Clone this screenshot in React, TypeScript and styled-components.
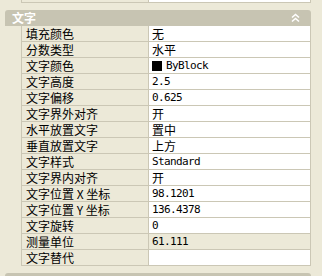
import React from 'react';
import styled, { createGlobalStyle } from 'styled-components';

const Global = createGlobalStyle`
  html, body { margin: 0; padding: 0; background: #ece9d8; overflow: hidden; }
  body { font-family: "Noto Sans CJK SC", sans-serif; font-size: 12px; color: #000; }
`;

const Panel = styled.div`
  width: 322px;
  height: 276px;
  overflow: hidden;
  background: #ece9d8;
  display: flex;
  flex-direction: column;
`;

const Section = styled.section`
  display: flex;
  flex-direction: column;
  padding: 0 11px 0 5px;
  margin-top: 7px;
`;

const Header = styled.div`
  height: 16px;
  background: #c7c4b2;
  border-radius: 3px 3px 0 0;
  display: flex;
  align-items: center;
  justify-content: space-between;
  padding: 0 11px 0 7px;
  color: #fff;
  font-weight: bold;
  font-size: 12px;
  line-height: 16px;
`;

const Table = styled.div`
  margin-left: 16px;
  width: 290px;
  box-sizing: border-box;
  border-left: 1px solid #cbc7b5;
  border-right: 1px solid #cbc7b5;
  display: flex;
  flex-direction: column;
`;

const StubTable = styled(Table)`
  margin-left: 21px;
`;

const Row = styled.div<{ $h?: number }>`
  display: grid;
  grid-template-columns: 127px 1fr;
  height: ${(p) => p.$h ?? 16}px;
  box-sizing: border-box;
  border-bottom: 1px solid #cbc7b5;
`;

const Label = styled.div`
  background: #ece9d8;
  border-right: 1px solid #cbc7b5;
  padding-left: 4px;
  line-height: 15px;
  white-space: nowrap;
  overflow: hidden;
`;

const Value = styled.div<{ $readonly?: boolean; $mono?: boolean }>`
  background: ${(p) => (p.$readonly ? '#ece9d8' : '#fff')};
  padding-left: 3px;
  line-height: 15px;
  white-space: nowrap;
  overflow: hidden;
  display: flex;
  align-items: center;
  gap: 4px;
  ${(p) =>
    p.$mono
      ? `font-family: "DejaVu Sans Mono", "Noto Sans CJK SC", monospace; font-size: 11px; letter-spacing: -0.62px;`
      : ''}
`;

const Swatch = styled.span`
  width: 10px;
  height: 10px;
  background: #000;
  flex: none;
`;

const Chevron = () => (
  <svg width="9" height="10" viewBox="0 0 9 10" fill="none" stroke="#fff" strokeWidth="1.6">
    <polyline points="1,4.5 4.5,1.5 8,4.5" />
    <polyline points="1,8.5 4.5,5.5 8,8.5" />
  </svg>
);

type Item = { label: string; value: string; mono?: boolean; swatch?: boolean; readonly?: boolean };

const items: Item[] = [
  { label: '填充颜色', value: '无' },
  { label: '分数类型', value: '水平' },
  { label: '文字颜色', value: 'ByBlock', mono: true, swatch: true },
  { label: '文字高度', value: '2.5', mono: true },
  { label: '文字偏移', value: '0.625', mono: true },
  { label: '文字界外对齐', value: '开' },
  { label: '水平放置文字', value: '置中' },
  { label: '垂直放置文字', value: '上方' },
  { label: '文字样式', value: 'Standard', mono: true },
  { label: '文字界内对齐', value: '开' },
  { label: '文字位置 X 坐标', value: '98.1201', mono: true },
  { label: '文字位置 Y 坐标', value: '136.4378', mono: true },
  { label: '文字旋转', value: '0', mono: true },
  { label: '测量单位', value: '61.111', mono: true, readonly: true },
  { label: '文字替代', value: '' },
];

export default function App() {
  return (
    <Panel>
      <Global />
      <StubTable>
        <Row $h={3}>
          <Label />
          <Value />
        </Row>
      </StubTable>
      <Section>
        <Header>
          <span>文字</span>
          <Chevron />
        </Header>
        <Table>
          {items.map((it) => (
            <Row key={it.label}>
              <Label>{it.label}</Label>
              <Value $mono={it.mono} $readonly={it.readonly}>
                {it.swatch && <Swatch />}
                {it.value}
              </Value>
            </Row>
          ))}
        </Table>
      </Section>
      <Section>
        <Header />
      </Section>
    </Panel>
  );
}
